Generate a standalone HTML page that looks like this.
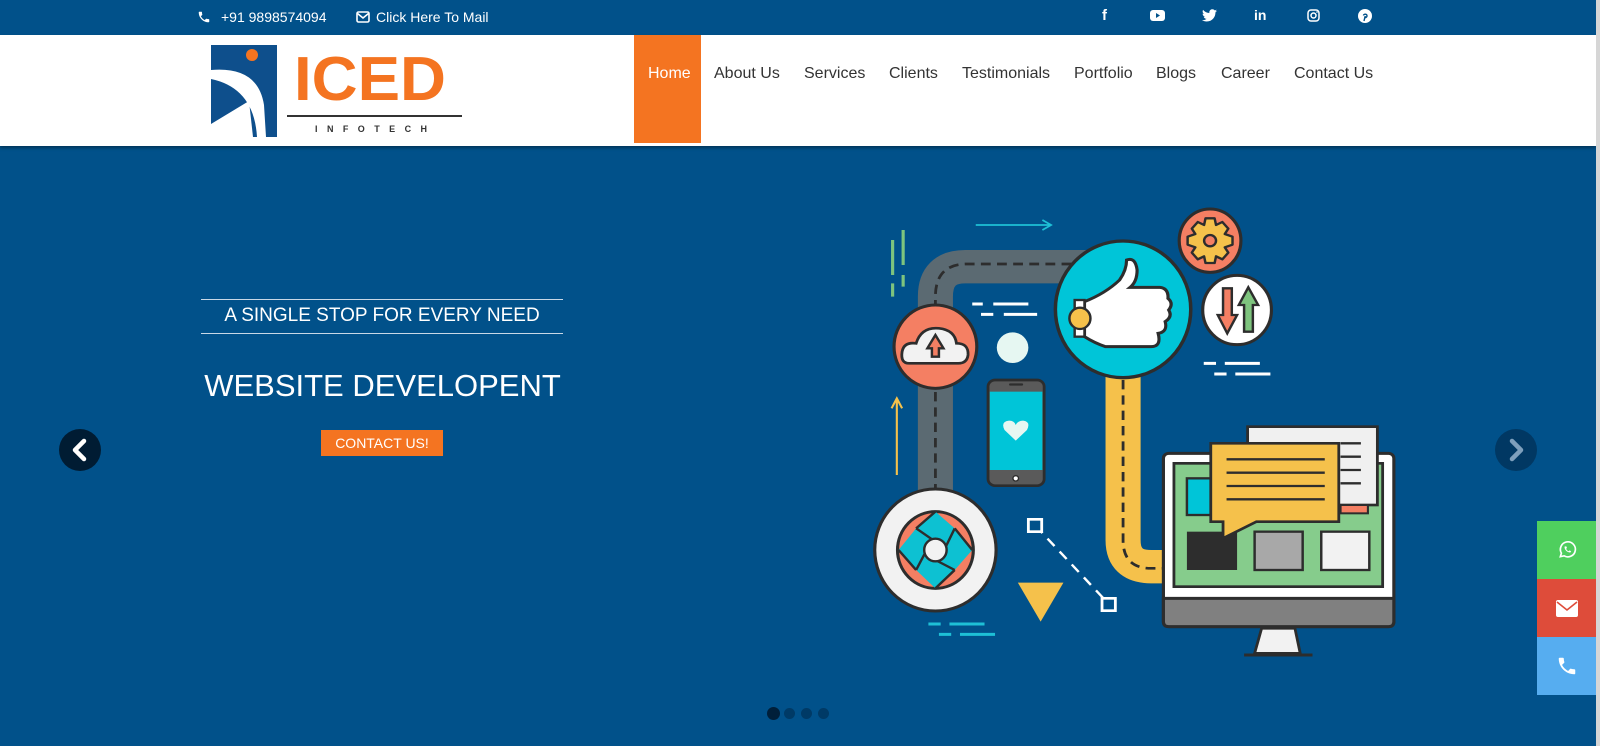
<!DOCTYPE html>
<html><head><meta charset="utf-8">
<style>
*{margin:0;padding:0;box-sizing:border-box}
html,body{width:1600px;height:746px;overflow:hidden;background:#01518a;font-family:"Liberation Sans",Arial,sans-serif}
.top{position:absolute;left:0;top:0;width:1596px;height:35px;background:#01518a;color:#fff;font-size:14px}
.top span{position:absolute;top:9px}
.hdr{position:absolute;left:0;top:35px;width:1596px;height:111px;background:#fff;box-shadow:0 2px 3px rgba(0,0,0,.35)}
.sb{position:absolute;right:0;top:0;width:4px;height:746px;background:#d6d6d6}
.nav a{position:absolute;top:30px;font-size:16px;color:#333;text-decoration:none}
.home{position:absolute;left:634px;top:0;width:67px;height:108px;background:#f47421}
.tag{position:absolute;left:201px;top:299px;width:362px;height:35px;border-top:1px solid #c9d8e6;border-bottom:1px solid #c9d8e6;color:#fff;font-size:19px;text-align:center;line-height:32px}
.h1{position:absolute;left:200px;top:368px;width:365px;color:#fff;font-size:31px;text-align:center}
.btn{position:absolute;left:321px;top:430px;width:122px;height:26px;background:#f47421;color:#fff;font-size:14px;text-align:center;line-height:26px}
.arr{position:absolute;width:42px;height:42px;border-radius:50%;}
.stk{position:absolute;left:1537px;width:59px;height:58px}
.dot{position:absolute;border-radius:50%;background:#003a66}
</style></head><body>
<div class="top">
<svg style="position:absolute;left:197px;top:10px" width="14" height="14" viewBox="0 0 24 24"><path fill="#fff" d="M6.6 10.8c1.4 2.8 3.8 5.1 6.6 6.6l2.2-2.2c.3-.3.7-.4 1-.2 1.1.4 2.300.6 3.6.6.6 0 1 .4 1 1V20c0 .6-.4 1-1 1C10.6 21 3 13.4 3 4c0-.6.4-1 1-1h3.5c.6 0 1 .4 1 1 0 1.3.2 2.5.6 3.6.1.3 0 .7-.2 1L6.6 10.8z"/></svg>
<span style="left:221px">+91 9898574094</span>
<svg style="position:absolute;left:356px;top:11px" width="14" height="12" viewBox="0 0 14 12"><rect x="1" y="1" width="12" height="10" rx="1.5" fill="none" stroke="#fff" stroke-width="1.6"/><path d="M1.5 2.5 7 7l5.5-4.5" fill="none" stroke="#fff" stroke-width="1.6"/></svg>
<span style="left:376px">Click Here To Mail</span>
<span style="left:1102px;top:7px;font-weight:bold;font-size:15px">f</span>
<svg style="position:absolute;left:1150px;top:10px" width="15" height="12" viewBox="0 0 15 12"><rect width="15" height="11" rx="3" fill="#fff"/><path d="M6 3v5l4-2.5z" fill="#01518a"/></svg>
<svg style="position:absolute;left:1202px;top:9px" width="15" height="13" viewBox="0 0 24 20"><path fill="#fff" d="M24 2.4c-.9.4-1.8.7-2.8.8 1-.6 1.8-1.6 2.2-2.7-1 .6-2 1-3.1 1.2C19.4.7 18.1 0 16.600 0c-2.7 0-4.9 2.2-4.9 4.9 0 .4 0 .8.1 1.1C7.7 5.8 4.1 3.9 1.7.9c-.4.7-.7 1.6-.7 2.5 0 1.7.9 3.2 2.2 4.1-.8 0-1.6-.2-2.2-.6v.1c0 2.4 1.7 4.4 3.9 4.8-.4.1-.8.2-1.3.2-.3 0-.6 0-.9-.1.6 2 2.4 3.4 4.6 3.4-1.7 1.3-3.8 2.1-6.1 2.1-.4 0-.8 0-1.2-.1 2.2 1.4 4.8 2.2 7.5 2.2 9.1 0 14-7.5 14-14v-.6c1-.7 1.8-1.6 2.5-2.5z"/></svg>
<span style="left:1254px;top:7px;font-weight:bold;font-size:14px">in</span>
<svg style="position:absolute;left:1307px;top:9px" width="13" height="13" viewBox="0 0 13 13"><rect x="1" y="1" width="11" height="11" rx="3" fill="none" stroke="#fff" stroke-width="1.5"/><circle cx="6.5" cy="6.5" r="2.5" fill="none" stroke="#fff" stroke-width="1.5"/><circle cx="10" cy="3" r=".8" fill="#fff"/></svg>
<svg style="position:absolute;left:1358px;top:9px" width="14" height="14" viewBox="0 0 14 14"><circle cx="7" cy="7" r="7" fill="#fff"/><path d="M6 12l1.2-5M5.5 6.5c0-1.6 3.5-2 3.5.3 0 1.7-2 2.3-2.3 1" stroke="#01518a" stroke-width="1.4" fill="none"/></svg>
</div>
<div class="hdr">
<svg style="position:absolute;left:0;top:0" width="480" height="111" viewBox="0 35 480 111">
<rect x="211" y="45" width="66" height="92" fill="#0e4f8c"/>
<path d="M211 70 Q258 66 264 105 L266 137 L257 137 Q254 88 211 79 Z" fill="#fff"/>
<path d="M211 124 L249 101 L253 137 L211 137 Z" fill="#fff"/>
<circle cx="252" cy="55" r="6" fill="#f47421"/>
<text x="294" y="100" font-family="Liberation Sans" font-weight="bold" font-size="62" fill="#f47421" textLength="152" lengthAdjust="spacingAndGlyphs">ICED</text>
<rect x="287" y="115" width="175" height="2" fill="#333"/>
<text x="315" y="132" font-family="Liberation Sans" font-size="9" fill="#333" textLength="112" lengthAdjust="spacing" font-weight="bold">INFOTECH</text>
</svg>
<div class="home"></div>
<div class="nav">
<a style="left:648px;color:#fff">Home</a>
<a style="left:714px">About Us</a>
<a style="left:804px">Services</a>
<a style="left:889px">Clients</a>
<a style="left:962px">Testimonials</a>
<a style="left:1074px">Portfolio</a>
<a style="left:1156px">Blogs</a>
<a style="left:1221px">Career</a>
<a style="left:1294px">Contact Us</a>
</div>
</div>
<div class="tag">A SINGLE STOP FOR EVERY NEED</div>
<div class="h1">WEBSITE DEVELOPENT</div>
<div class="btn">CONTACT US!</div>
<div class="arr" style="left:59px;top:429px;background:#001c33"><svg width="42" height="42"><path d="M25 12 L16 21 L25 30" stroke="#fff" stroke-width="4.5" fill="none" stroke-linecap="round" stroke-linejoin="round"/></svg></div>
<div class="arr" style="left:1495px;top:429px;background:#013863"><svg width="42" height="42"><path d="M17 12 L26 21 L17 30" stroke="#7e9fbc" stroke-width="4.5" fill="none" stroke-linecap="round" stroke-linejoin="round"/></svg></div>

<svg style="position:absolute;left:860px;top:200px" width="550" height="470" viewBox="0 0 1568 1410" preserveAspectRatio="none">
<g stroke-linecap="butt">
<path d="M215 880 V290 Q215 200 300 200 H650" stroke="#5b6a72" stroke-width="100" fill="none"/>
<path d="M215 880 V290 Q215 195 300 192 H650" stroke="#2d2d2d" stroke-width="8" fill="none" stroke-dasharray="28 18"/>
<path d="M750 520 V1020 Q750 1100 830 1100 H880" stroke="#f5c14b" stroke-width="100" fill="none"/>
<path d="M750 540 V1020 Q750 1105 830 1105 H880" stroke="#2d2d2d" stroke-width="8" fill="none" stroke-dasharray="28 18"/>
</g>
<path d="M93 120 V225 M93 250 V290 M123 90 V195 M123 225 V260" stroke="#7ec47e" stroke-width="9"/>
<path d="M330 75 H540 M520 60 L545 75 520 90" stroke="#1ec0d6" stroke-width="5" fill="none"/>
<path d="M105 825 V600 M90 625 L105 595 120 625" stroke="#f5c14b" stroke-width="6" fill="none"/>
<path d="M320 312 H350 M380 312 H480 M345 343 H380 M410 343 H505 M980 490 H1015 M1040 490 H1140 M1010 522 H1045 M1070 522 H1170" stroke="#fff" stroke-width="9"/>
<path d="M195 1272 H230 M255 1272 H355 M225 1303 H260 M285 1303 H385" stroke="#1ec0d6" stroke-width="9"/>
<ellipse cx="215" cy="440" rx="118" ry="125" fill="#f47f63" stroke="#2d2d2d" stroke-width="9"/>
<path d="M140 490 Q115 490 120 455 Q125 425 160 430 Q175 380 225 385 Q270 390 275 430 Q310 430 308 465 Q305 490 280 490 Z" fill="#f2f2f2" stroke="#2d2d2d" stroke-width="8"/>
<path d="M205 470 V445 H192 L215 405 238 445 H225 V470 Z" fill="#f47f63" stroke="#2d2d2d" stroke-width="7"/>
<ellipse cx="435" cy="443" rx="45" ry="46" fill="#e6f7f2"/>
<rect x="365" y="540" width="160" height="317" rx="20" fill="#5a5a5a" stroke="#2d2d2d" stroke-width="8"/>
<rect x="370" y="575" width="150" height="235" fill="#00c5d8"/>
<rect x="425" y="550" width="40" height="7" rx="3" fill="#2d2d2d"/>
<circle cx="444" cy="835" r="8" fill="#fff" stroke="#2d2d2d" stroke-width="4"/>
<path d="M444 722 L412 690 Q400 665 425 662 Q440 662 444 675 Q450 662 465 662 Q488 665 476 690 Z" fill="#e6f7f2"/>
<ellipse cx="750" cy="328" rx="193" ry="205" fill="#00c5d8" stroke="#2d2d2d" stroke-width="10"/>
<path d="M640 305 Q700 280 740 240 Q760 210 760 180 Q785 170 790 210 Q790 245 770 262 H855 Q880 265 878 295 Q895 310 880 330 Q892 350 870 365 Q878 395 850 400 Q860 440 830 440 H700 Q670 430 640 410 Z" fill="#fff" stroke="#2d2d2d" stroke-width="9"/>
<rect x="612" y="300" width="28" height="110" fill="#fff" stroke="#2d2d2d" stroke-width="7"/>
<ellipse cx="627" cy="355" rx="30" ry="32" fill="#f5c14b" stroke="#2d2d2d" stroke-width="7"/>
<ellipse cx="998" cy="122" rx="88" ry="95" fill="#f47f63" stroke="#2d2d2d" stroke-width="9"/>
<path d="M985 55 H1011 L1015 75 L1033 66 L1050 86 L1040 102 L1062 110 V134 L1040 142 L1050 158 L1033 178 L1015 169 L1011 189 H985 L981 169 L963 178 L946 158 L956 142 L934 134 V110 L956 102 L946 86 L963 66 L981 75 Z" fill="#f5c14b" stroke="#2d2d2d" stroke-width="7" stroke-linejoin="round"/>
<circle cx="998" cy="122" r="17" fill="#f47f63" stroke="#2d2d2d" stroke-width="7"/>
<ellipse cx="1075" cy="330" rx="98" ry="104" fill="#fff" stroke="#2d2d2d" stroke-width="9"/>
<path d="M1035 265 H1060 V345 H1075 L1047 400 1020 345 H1035 Z" fill="#f47f63" stroke="#2d2d2d" stroke-width="7"/>
<path d="M1095 395 H1120 V315 H1135 L1107 262 1080 315 H1095 Z" fill="#7ec47e" stroke="#2d2d2d" stroke-width="7"/>
<ellipse cx="215" cy="1050" rx="173" ry="183" fill="#f2f2f2" stroke="#2d2d2d" stroke-width="9"/>
<ellipse cx="215" cy="1050" rx="108" ry="115" fill="#f47f63" stroke="#2d2d2d" stroke-width="9"/>
<path d="M215 935 L270 985 L320 1050 L270 1110 L215 1165 L160 1110 L110 1050 L160 985 Z" fill="#00c5d8" opacity=".95"/>
<path d="M215 935 L160 985 M320 1050 L270 985 M215 1165 L270 1110 M110 1050 L160 1110 M160 985 L215 1025 M270 985 L240 1050 M270 1110 L215 1080 M160 1110 L190 1050" stroke="#2d2d2d" stroke-width="7"/>
<ellipse cx="215" cy="1050" rx="32" ry="34" fill="#f2f2f2" stroke="#2d2d2d" stroke-width="7"/>
<path d="M500 977 L710 1213" stroke="#fff" stroke-width="7" stroke-dasharray="30 22"/>
<rect x="480" y="958" width="38" height="37" fill="#01518a" stroke="#fff" stroke-width="8"/>
<rect x="690" y="1195" width="38" height="37" fill="#01518a" stroke="#fff" stroke-width="8"/>
<path d="M450 1148 H580 L515 1265 Z" fill="#f5c14b"/>
<path d="M1145 1285 H1240 L1255 1360 H1125 Z" fill="#f2f2f2" stroke="#2d2d2d" stroke-width="8"/>
<path d="M1095 1365 H1290" stroke="#2d2d2d" stroke-width="9"/>
<rect x="865" y="760" width="657" height="520" rx="15" fill="#fff" stroke="#2d2d2d" stroke-width="9"/>
<path d="M865 1195 H1522 V1265 Q1522 1280 1507 1280 H880 Q865 1280 865 1265 Z" fill="#808080" stroke="#2d2d2d" stroke-width="9"/>
<rect x="895" y="790" width="595" height="370" fill="#86cc8c" stroke="#2d2d2d" stroke-width="8"/>
<rect x="1105" y="680" width="370" height="235" fill="#f0f0f0" stroke="#2d2d2d" stroke-width="8"/>
<path d="M1370 730 H1428 M1370 770 H1428 M1370 810 H1428 M1370 850 H1428" stroke="#2d2d2d" stroke-width="7"/>
<rect x="1370" y="915" width="78" height="25" fill="#f47f63" stroke="#2d2d2d" stroke-width="6"/>
<rect x="932" y="835" width="68" height="110" fill="#00c5d8" stroke="#2d2d2d" stroke-width="7"/>
<rect x="932" y="995" width="143" height="115" fill="#2d2d2d"/>
<rect x="1125" y="995" width="137" height="115" fill="#a8a8a8" stroke="#2d2d2d" stroke-width="7"/>
<rect x="1315" y="995" width="137" height="115" fill="#f2f2f2" stroke="#2d2d2d" stroke-width="7"/>
<path d="M1000 730 H1365 V965 H1130 L1035 1015 V965 H1000 Z" fill="#f5c14b" stroke="#2d2d2d" stroke-width="8"/>
<path d="M1045 778 H1325 M1045 818 H1325 M1045 858 H1325 M1045 898 H1325" stroke="#2d2d2d" stroke-width="7"/>
</svg>

<div class="stk" style="top:521px;background:#4fcf5e"><svg style="position:absolute;left:20px;top:19px" width="20" height="20" viewBox="0 0 24 24"><path d="M4 20l1.3-4.2A9 9 0 1 1 8.5 19z" fill="none" stroke="#fff" stroke-width="2"/><path d="M9 8c0 4 3 7 7 7l1-1.5-2-1-1 1c-1.5-.5-2.5-1.5-3-3l1-1-1-2z" fill="#fff"/></svg></div>
<div class="stk" style="top:579px;background:#de4c3a"><svg style="position:absolute;left:19px;top:21px" width="22" height="17" viewBox="0 0 22 17"><rect width="22" height="17" rx="2" fill="#fff"/><path d="M1 2l10 8 10-8" fill="none" stroke="#de4c3a" stroke-width="1.6"/></svg></div>
<div class="stk" style="top:637px;background:#56adf0"><svg style="position:absolute;left:19px;top:18px" width="22" height="22" viewBox="0 0 24 24"><path fill="#fff" d="M6.6 10.8c1.4 2.8 3.8 5.1 6.6 6.6l2.2-2.2c.3-.3.7-.4 1-.2 1.1.4 2.3.6 3.6.6.6 0 1 .4 1 1V20c0 .6-.4 1-1 1C10.6 21 3 13.4 3 4c0-.6.4-1 1-1h3.5c.6 0 1 .4 1 1 0 1.3.2 2.5.6 3.6.1.3 0 .7-.2 1L6.6 10.8z"/></svg></div>

<div class="dot" style="left:767px;top:707px;width:13px;height:13px;background:#001f3a"></div>
<div class="dot" style="left:784px;top:708px;width:11px;height:11px"></div>
<div class="dot" style="left:801px;top:708px;width:11px;height:11px"></div>
<div class="dot" style="left:818px;top:708px;width:11px;height:11px"></div>
<div class="sb"></div>
</body></html>
